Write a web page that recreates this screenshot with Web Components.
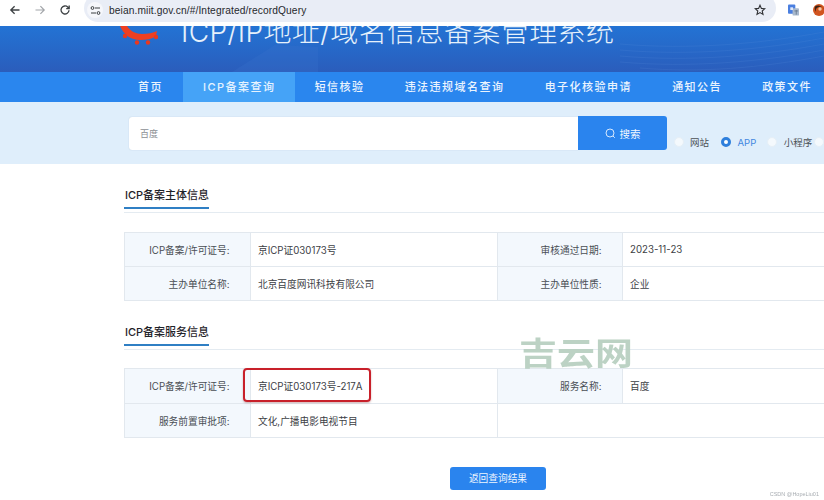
<!DOCTYPE html>
<html lang="zh">
<head>
<meta charset="utf-8">
<title>ICP/IP地址/域名信息备案管理系统</title>
<style>
  html, body { margin: 0; height: 500px; overflow: hidden; background: #fff; }
  body { font-family: Inter, "Liberation Sans", "Noto Sans CJK SC", sans-serif; color: #333; }
</style>
</head>
<body>
<browser-bar url="beian.miit.gov.cn/#/Integrated/recordQuery"></browser-bar>
<site-header>ICP/IP地址/域名信息备案管理系统</site-header>
<site-nav>
  <nav-item>首页</nav-item>
  <nav-item active>ICP备案查询</nav-item>
  <nav-item>短信核验</nav-item>
  <nav-item>违法违规域名查询</nav-item>
  <nav-item>电子化核验申请</nav-item>
  <nav-item>通知公告</nav-item>
  <nav-item>政策文件</nav-item>
</site-nav>
<search-band value="百度">
  <radio-opt>网站</radio-opt>
  <radio-opt checked>APP</radio-opt>
  <radio-opt style="margin-right:2px">小程序</radio-opt>
  <radio-opt></radio-opt>
</search-band>
<record-page>
  <section-title>ICP备案主体信息</section-title>
  <info-table>
    <info-row>
      <span slot="k1">ICP备案/许可证号:</span><span slot="v1">京ICP证030173号</span>
      <span slot="k2">审核通过日期:</span><span slot="v2">2023-11-23</span>
    </info-row>
    <info-row>
      <span slot="k1">主办单位名称:</span><span slot="v1">北京百度网讯科技有限公司</span>
      <span slot="k2">主办单位性质:</span><span slot="v2">企业</span>
    </info-row>
  </info-table>
  <section-title style="margin-bottom:18px">ICP备案服务信息</section-title>
  <info-table>
    <info-row style="height:35px">
      <span slot="k1">ICP备案/许可证号:</span><span slot="v1"><red-mark>京ICP证030173号-217A</red-mark></span>
      <span slot="k2">服务名称:</span><span slot="v2">百度</span>
    </info-row>
    <info-row short>
      <span slot="k1">服务前置审批项:</span><span slot="v1">文化,广播电影电视节目</span>
    </info-row>
  </info-table>
  <back-button>返回查询结果</back-button>
</record-page>
<page-marks></page-marks>

<script>
const CJK = 'Inter, "Liberation Sans", "Noto Sans CJK SC", sans-serif';

class BrowserBar extends HTMLElement {
  connectedCallback() {
    this.attachShadow({mode: "open"});
    this.shadowRoot.innerHTML = `
    <style>
      :host { display: flex; height: 26px; overflow: hidden; background: #fff; align-items: flex-start; }
      .nav { display: flex; width: 84px; height: 20px; padding-left: 9px; box-sizing: border-box; gap: 13px; align-items: center; }
      .nav svg { flex: none; }
      .pill { flex: none; width: 692px; height: 28px; margin-top: -6px; border-radius: 14px; background: #e9edf6;
              display: flex; align-items: center; padding-top: 4px; box-sizing: border-box; font: 10.2px "Liberation Sans", sans-serif; color: #26282c; letter-spacing: .12px; }
      .tune { width: 16px; height: 16px; margin: 0 6px 0 3px; border-radius: 50%; background: #f6f7fb; display: flex; align-items: center; justify-content: center; }
      .grow { flex: 1; }
      .right { display: flex; align-items: center; height: 20px; }
    </style>
    <div class="nav">
      <svg width="12" height="12" viewBox="0 0 12 12" fill="none" stroke="#3c4043" stroke-width="1.3"><path d="M10.5 6H2M5.6 2.2 1.8 6l3.8 3.8"/></svg>
      <svg width="12" height="12" viewBox="0 0 12 12" fill="none" stroke="#a2a5a9" stroke-width="1.2"><path d="M1.5 6H10M6.4 2.2 10.2 6 6.4 9.8"/></svg>
      <svg width="12" height="12" viewBox="0 0 12 12" fill="none" stroke="#3c4043" stroke-width="1.3"><path d="M10 6.2A4 4 0 1 1 8.9 3.2L10.2 4.6M10.2 1.6v3H7.2"/></svg>
    </div>
    <div class="pill">
      <span class="tune"><svg width="11" height="9" viewBox="0 0 11 9" fill="none" stroke="#3c4043" stroke-width="1"><circle cx="2.5" cy="2" r="1.4"/><path d="M5 2h5M1 7h5"/><circle cx="8.5" cy="7" r="1.4"/></svg></span>
      <span>${this.getAttribute("url")}</span>
      <span class="grow"></span>
      <svg style="margin-right:10px" width="12" height="12" viewBox="0 0 12 12" fill="none" stroke="#303236" stroke-width="1.1"><path d="M6 1.2 7.4 4.4l3.4.3-2.6 2.3.8 3.4L6 8.6l-3 1.8.8-3.4L1.2 4.7l3.4-.3z"/></svg>
    </div>
    <div class="right">
      <svg style="margin-left:12px" width="11" height="13" viewBox="0 0 12 13"><rect x="0" y="0" width="8" height="10" rx="1" fill="#4a7fe0"/><rect x="5" y="4" width="7" height="8" rx="1" fill="#a9b9cc"/><rect x="2.5" y="3" width="3" height="3" fill="#dfe8fa"/><path d="M7 7h4M9 6v5" stroke="#65768c" stroke-width=".9"/></svg>
      <svg style="margin-left:13px;flex:none" width="12" height="14" viewBox="0 0 12 14"><circle cx="7" cy="7" r="6" fill="#d1541f"/><path d="M3 3.5A6 6 0 0 1 12 7 4 4 0 0 0 4 9a6 6 0 0 1-1-5.500z" fill="#3b2415"/><circle cx="8" cy="6" r="1.700" fill="#f3c9a5"/></svg>
    </div>`;
  }
}
customElements.define("browser-bar", BrowserBar);

class SiteHeader extends HTMLElement {
  connectedCallback() {
    this.attachShadow({mode: "open"});
    this.shadowRoot.innerHTML = `
    <style>
      :host { display: block; position: relative; height: 46px; overflow: hidden;
              background: linear-gradient(180deg, #2373d4 0%, #2766c6 60%, #2b5dbb 100%); }
      .wrap { position: relative; display: flex; align-items: flex-end; height: 46px; padding: 0 0 24px 119px; box-sizing: border-box; }
      svg.logo { flex: none; margin-right: 22px; align-self: flex-start; }
      .title { font-family: ${CJK}; font-size: 28px; line-height: 36px; font-weight: 300; letter-spacing: .4px; color: #e6f1fb; white-space: nowrap; margin-bottom: -2px; }
      .deco { position: absolute; left: 0; top: 0; }
    </style>
    <svg class="deco" width="824" height="46" viewBox="0 0 824 46">
      <path d="M232 46 275 19 318 21V46z" fill="#3a74cc" opacity=".28"/>
      <g fill="none" stroke="#5f90dc" stroke-width=".5" opacity=".35">
        <path d="M620 18C690 24 760 18 824 6M620 24C690 30 760 24 824 12M620 30C690 36 760 30 824 18M620 36C690 42 760 36 824 24M640 42C700 47 760 42 824 30"/>
      </g>
    </svg>
    <div class="wrap">
      <svg class="logo" width="40" height="20" viewBox="0 0 40 20">
        <path d="M1 0H8C11 5 17 8 23 8 29 8 34 7 38 5L37 10C33 13 27 14 21 14 12 14 5 9 1 0z" fill="#ee3f22"/>
        <circle cx="6" cy="10" r="2.200" fill="#e8381f"/><circle cx="18" cy="16.500" r="2.200" fill="#e8381f"/>
        <circle cx="29" cy="16.500" r="2.200" fill="#e8381f"/><circle cx="37" cy="11" r="2.200" fill="#e8381f"/>
      </svg>
      <div class="title"><slot></slot></div>
    </div>`;
  }
}
customElements.define("site-header", SiteHeader);

class SiteNav extends HTMLElement {
  connectedCallback() {
    this.attachShadow({mode: "open"});
    this.shadowRoot.innerHTML = `
    <style>
      :host { display: flex; height: 30px; padding-left: 118px; background: #2a86ee; white-space: nowrap; overflow: hidden; }
    </style>
    <slot></slot>`;
  }
}
customElements.define("site-nav", SiteNav);

class NavItem extends HTMLElement {
  connectedCallback() {
    this.attachShadow({mode: "open"});
    this.shadowRoot.innerHTML = `
    <style>
      :host { display: block; flex: none; padding: 0 20px; line-height: 30px; font-family: ${CJK}; font-size: 11px; letter-spacing: 1.5px; color: #eaf4fe; font-weight: 500; }
      :host([active]) { background: #45a3f7; color: #e6f3ff; padding-right: 19px; }
    </style>
    <slot></slot>`;
  }
}
customElements.define("nav-item", NavItem);

class SearchBand extends HTMLElement {
  connectedCallback() {
    this.attachShadow({mode: "open"});
    this.shadowRoot.innerHTML = `
    <style>
      :host { display: flex; height: 62px; padding: 14px 0 0 129px; box-sizing: border-box; background: #dfeefb; overflow: hidden; font-family: ${CJK}; }
      .input { flex: none; width: 449px; height: 33px; margin-top: 1px; padding-left: 11px; box-sizing: border-box; background: #fff; border-radius: 3px 0 0 3px; box-shadow: 0 0 1px rgba(120,150,180,.5); font-size: 9px; line-height: 33px; color: #8b8f94; }
      .btn { position: relative; flex: none; width: 89px; height: 34px; background: #2a84ee; border-radius: 0 3px 3px 0; color: #f1f7fe; font-size: 10.500px; display: flex; align-items: center; justify-content: center; gap: 4px; box-sizing: border-box; }
      .radios { display: flex; margin-left: 6.500px; height: 33px; align-items: flex-end; flex: none; }
    </style>
    <div class="input">${this.getAttribute("value")}</div>
    <div class="btn">
      <svg width="11" height="11" viewBox="0 0 11 11" fill="none" stroke="#e8f2fe" stroke-width=".9"><circle cx="5" cy="5" r="4"/><path d="M8 8l1.800 1.800"/></svg>
      <span>搜索</span>
    </div>
    <div class="radios"><slot></slot></div>`;
  }
}
customElements.define("search-band", SearchBand);

class RadioOpt extends HTMLElement {
  connectedCallback() {
    this.attachShadow({mode: "open"});
    this.shadowRoot.innerHTML = `
    <style>
      :host { display: flex; flex: none; align-items: center; height: 14px; margin-right: 12px; font-size: 9.500px; color: #4c5156; white-space: nowrap; }
      :host([checked]) { color: #3f86e0; margin-right: 11px; }
      i { flex: none; width: 10px; height: 10px; margin-right: 6.500px; border-radius: 50%; background: #f4f9fd; box-sizing: border-box; border: 1px solid #e6eff7; }
      :host([checked]) i { background: #fff; border: 3px solid #2e7fdc; }
    </style>
    <i></i><slot></slot>`;
  }
}
customElements.define("radio-opt", RadioOpt);

class RecordPage extends HTMLElement {
  connectedCallback() {
    this.attachShadow({mode: "open"});
    this.shadowRoot.innerHTML = `
    <style>
      :host { display: block; padding-left: 124px; font-family: ${CJK}; }
      .inner { width: 720px; display: flex; flex-direction: column; }
    </style>
    <div class="inner"><slot></slot></div>`;
  }
}
customElements.define("record-page", RecordPage);

class SectionTitle extends HTMLElement {
  connectedCallback() {
    this.attachShadow({mode: "open"});
    this.shadowRoot.innerHTML = `
    <style>
      :host { display: block; margin: 24px 0 19px; padding-bottom: 3px; border-bottom: 1px solid #e4ebf1; }
      span { display: inline-block; vertical-align: top; font-size: 11px; line-height: 14px; font-weight: 500; color: #1f2329; padding: 0 0 5px 1px; border-bottom: 2px solid #2f7fc4; }
    </style>
    <span><slot></slot></span>`;
  }
}
customElements.define("section-title", SectionTitle);

class InfoTable extends HTMLElement {
  connectedCallback() {
    this.attachShadow({mode: "open"});
    this.shadowRoot.innerHTML = `
    <style>
      :host { display: block; border-top: 1px solid #e2e8ee; border-left: 1px solid #e2e8ee; }
    </style>
    <slot></slot>`;
  }
}
customElements.define("info-table", InfoTable);

class InfoRow extends HTMLElement {
  connectedCallback() {
    this.attachShadow({mode: "open"});
    const short = this.hasAttribute("short");
    this.shadowRoot.innerHTML = `
    <style>
      :host { display: grid; grid-template-columns: 126px 247px 125px 1fr; height: 34px; box-sizing: border-box; font-size: 9.700px; color: #3c4045; border-bottom: 1px solid #e2e8ee; }
      .k, .v { display: flex; align-items: center; border-right: 1px solid #e2e8ee; box-sizing: border-box; }
      .k { justify-content: flex-end; padding-right: 20.500px; background: #f3f8fd; color: #4a4f55; }
      .v { padding-left: 7px; }
    </style>
    <div class="k"><slot name="k1"></slot></div>
    <div class="v"><slot name="v1"></slot></div>
    ${short ? "" : `<div class="k"><slot name="k2"></slot></div><div class="v"><slot name="v2"></slot></div>`}`;
  }
}
customElements.define("info-row", InfoRow);

class RedMark extends HTMLElement {
  connectedCallback() {
    this.attachShadow({mode: "open"});
    this.shadowRoot.innerHTML = `
    <style>
      :host { display: inline-block; position: relative; }
      .box { position: absolute; left: -15px; top: -11px; width: 128px; height: 34px; box-sizing: border-box; border: 2px solid #c8202a; border-radius: 4px; box-shadow: 0 1px 2px rgba(120,30,30,.35); }
    </style>
    <slot></slot><div class="box"></div>`;
  }
}
customElements.define("red-mark", RedMark);

class BackButton extends HTMLElement {
  connectedCallback() {
    this.attachShadow({mode: "open"});
    this.shadowRoot.innerHTML = `
    <style>
      :host { display: block; align-self: flex-start; width: 96px; height: 23px; margin: 29px 0 0 326px; border-radius: 3px; background: #2a84ee; color: #eef6fe; font-size: 9.700px; line-height: 23px; text-align: center; }
    </style>
    <slot></slot>`;
  }
}
customElements.define("back-button", BackButton);

// watermark and csdn tag sit over the finished page
class PageMarks extends HTMLElement {
  connectedCallback() {
    this.attachShadow({mode: "open"});
    this.shadowRoot.innerHTML = `
    <style>
      .wm { position: fixed; left: 519px; top: 330px; font-family: ${CJK}; font-size: 38px; line-height: 46px; font-weight: 700; color: #b5cebe; opacity: .9; white-space: nowrap; transform: scaleY(.83); }
      .tag { position: fixed; right: 5px; top: 490px; font: 5.500px/8px "Liberation Sans", sans-serif; color: #a8adb2; white-space: nowrap; }
    </style>
    <div class="wm">吉云网</div>
    <div class="tag">CSDN @HopeLiu01</div>`;
  }
}
customElements.define("page-marks", PageMarks);
</script>
</body>
</html>
